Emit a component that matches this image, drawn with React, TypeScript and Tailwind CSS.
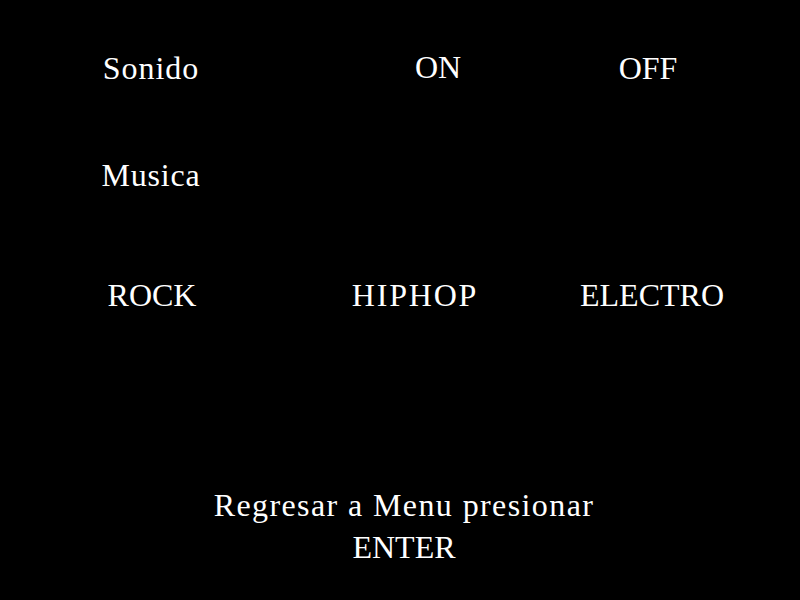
import React from 'react';

const App: React.FC = () => {
  return (
    <div className="w-[800px] h-[600px] bg-black text-white font-['Liberation_Serif',serif] text-[32px] leading-[42px] pt-[47px]">
      <div className="flex">
        <span className="w-[302px] text-center tracking-[1px]">Sonido</span>
        <span className="w-[272px] text-center -mt-[1px]">ON</span>
        <span className="w-[148px] text-center">OFF</span>
      </div>
      <div className="flex mt-[65px]">
        <span className="w-[302px] text-center tracking-[0.8px]">Musica</span>
      </div>
      <div className="flex mt-[78px]">
        <span className="w-[304px] text-center">ROCK</span>
        <span className="w-[222px] text-center tracking-[1.8px]">HIPHOP</span>
        <span className="w-[252px] text-center">ELECTRO</span>
      </div>
      <div className="mt-[168px] w-[808px] text-center">
        <p className="tracking-[1.4px]">Regresar a Menu presionar</p>
        <p>ENTER</p>
      </div>
    </div>
  );
};

export default App;
